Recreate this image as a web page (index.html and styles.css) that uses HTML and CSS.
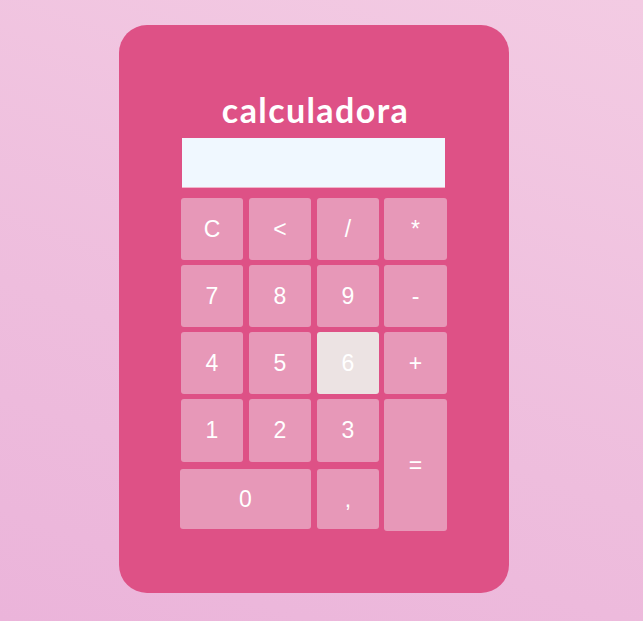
FILE: index.html
```html
<!DOCTYPE html>
<html lang="pt">
<head>
<meta charset="utf-8">
<title>calculadora</title>
<link rel="stylesheet" href="styles.css">
</head>
<body>
<main class="calc">
  <h1 class="title">calculadora</h1>
  <input class="display" type="text" readonly>
  <div class="keys">
    <button class="key">C</button>
    <button class="key">&lt;</button>
    <button class="key">/</button>
    <button class="key key-op">*</button>
    <button class="key">7</button>
    <button class="key">8</button>
    <button class="key">9</button>
    <button class="key key-op">-</button>
    <button class="key">4</button>
    <button class="key">5</button>
    <button class="key key-active">6</button>
    <button class="key key-op">+</button>
    <button class="key">1</button>
    <button class="key">2</button>
    <button class="key">3</button>
    <button class="key key-op key-equals">=</button>
    <button class="key key-zero">0</button>
    <button class="key key-comma">,</button>
  </div>
</main>
</body>
</html>
```

FILE: styles.css
```css
html, body {
  margin: 0;
  padding: 0;
}

body {
  width: 643px;
  height: 621px;
  overflow: hidden;
  background: linear-gradient(200deg, #f3cbe3 0%, #eebddd 60%, #ebb4da 100%);
  font-family: "Liberation Sans", Arial, sans-serif;
  padding-top: 25px;
  box-sizing: border-box;
}

.calc {
  width: 390px;
  height: 568px;
  margin-left: 119px;
  background: #de5186;
  border-radius: 28px;
  box-sizing: border-box;
  padding-top: 63px;
  display: flex;
  flex-direction: column;
  align-items: center;
}

.title {
  margin: 0;
  font-family: Lato, "Open Sans", sans-serif;
  font-weight: 700;
  font-size: 34px;
  letter-spacing: 1.4px;
  line-height: 44px;
  color: #ffffff;
  margin-left: 3px;
}

.display {
  width: 263px;
  height: 50px;
  margin: 6px 0 0 0;
  padding: 0;
  border: none;
  border-bottom: 1px solid #f1b6cb;
  box-sizing: border-box;
  background: #f0f8ff;
  outline: none;
  margin-left: -1px;
}

.keys {
  margin-top: 10px;
  display: grid;
  grid-template-columns: 62px 62px 62px 62px;
  grid-template-rows: 62px 62px 62px 63px 62px;
  column-gap: 6px;
  row-gap: 5px;
}

.key {
  border: none;
  border-radius: 3px;
  background: #e798b8;
  color: #ffffff;
  font-family: "Liberation Sans", Arial, sans-serif;
  font-size: 23px;
  padding: 0;
  margin: 0;
}

.key-op {
  margin-left: -1px;
}

.key-active {
  background: #ece3e3;
}

.key-equals {
  grid-column: 4;
  grid-row: 4 / 6;
  height: 132px;
  align-self: start;
}

.key-zero {
  grid-column: 1 / 3;
  grid-row: 5;
  margin-top: 2px;
  margin-left: -1px;
}

.key-comma {
  grid-column: 3;
  grid-row: 5;
  margin-top: 2px;
}
```
